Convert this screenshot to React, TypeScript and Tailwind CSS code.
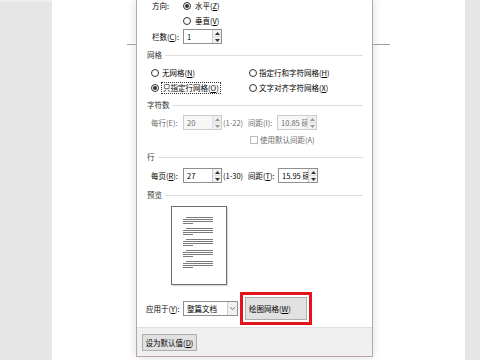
import React from 'react';

const font = { fontFamily: '"Noto Sans CJK SC", "Noto Sans", sans-serif' };

// radio button glyph
const Radio = ({ checked }: { checked?: boolean }) => (
  <span className="w-[8px] h-[8px] rounded-full border border-[#333333] bg-white flex items-center justify-center shrink-0">
    {checked && <span className="w-[4px] h-[4px] rounded-full bg-[#333333]" />}
  </span>
);

const Key = ({ k }: { k: string }) => (
  <>
    (<span className="underline">{k}</span>)
  </>
);

const Tri = ({ up, color }: { up?: boolean; color: string }) => (
  <svg width="5" height="3" viewBox="0 0 5 3">
    <path d={up ? 'M0 3 L2.5 0 L5 3 Z' : 'M0 0 L2.5 3 L5 0 Z'} fill={color} />
  </svg>
);

const SpinInput = ({ value, disabled, width }: { value: string; disabled?: boolean; width: string }) => (
  <div
    className={`flex h-[15px] border ${disabled ? 'border-[#cccccc] bg-[#f7f7f7] text-[#6d6d6d]' : 'border-[#8f8f8f] bg-white text-black'} ${width}`}
  >
    <div className="flex-1 pl-[3px] flex items-center overflow-hidden whitespace-nowrap">{value}</div>
    <div className={`w-[9px] flex flex-col border-l ${disabled ? 'border-[#dddddd]' : 'border-[#cccccc]'}`}>
      <div className="flex-1 flex items-center justify-center bg-[#f0f0f0]">
        <Tri up color={disabled ? '#999' : '#333'} />
      </div>
      <div className="flex-1 flex items-center justify-center bg-[#f0f0f0] border-t border-[#dddddd]">
        <Tri color={disabled ? '#999' : '#333'} />
      </div>
    </div>
  </div>
);

const Heading = ({ children, mt }: { children: React.ReactNode; mt: string }) => (
  <div className={`flex items-center h-[12px] ${mt}`}>
    <span className="text-[#333333]">{children}</span>
    <div className="flex-1 h-px bg-[#dcdcdc] ml-[3px]" />
  </div>
);

const PreviewLines = () => (
  <div className="flex flex-col gap-[4px]">
    {[0, 1, 2, 3, 4].map((g) => (
      <div key={g} className="flex flex-col gap-[1px]">
        <div className="h-px bg-[#7a7a7a] ml-[3px] w-[27px]" />
        <div className="h-px bg-[#7a7a7a] w-[30px]" />
        <div className="h-px bg-[#7a7a7a] w-[30px]" />
        <div className="h-px bg-[#7a7a7a] w-[10px]" />
      </div>
    ))}
  </div>
);

export default function App() {
  return (
    <div className="w-[480px] h-[360px] flex bg-white overflow-hidden text-[7.5px] leading-none text-black" style={font}>
      <div className="w-[52px] h-full bg-[#e6e6e6] border-t-2 border-[#ededed]" />

      <div className="flex-1 relative">
        {/* ruler marks of the page behind */}
        <div className="absolute left-[75px] top-[44px] w-[9px] h-px bg-[#a0a0a0]" />
        <div className="absolute left-[321px] top-[44px] w-[17px] h-px bg-[#a0a0a0]" />

        <div className="ml-[84px] w-[237px] h-[357px] flex flex-col border-x border-b border-[#b9a3ab] bg-[#f0f0f0] shadow-[0_0_10px_rgba(0,0,0,0.14)]">
          {/* tab page */}
          <div className="h-[327px] bg-white pl-[10px] pr-[9px] flex flex-col">
            <div className="flex items-center h-[12px] ml-[5px]">
              <span className="w-[31px]">方向:</span>
              <Radio checked />
              <span className="ml-[4px]">
                水平<Key k="Z" />
              </span>
            </div>
            <div className="flex items-center h-[17px] ml-[36px]">
              <Radio />
              <span className="ml-[4px]">
                垂直<Key k="V" />
              </span>
            </div>
            <div className="flex items-center h-[15px] ml-[5px]">
              <span className="w-[31px]">
                栏数<Key k="C" />:
              </span>
              <SpinInput value="1" width="w-[39px]" />
            </div>

            <Heading mt="mt-[5px]">网格</Heading>
            <div className="flex items-center h-[12px] mt-[6px] ml-[4px]">
              <div className="w-[98px] flex items-center">
                <Radio />
                <span className="ml-[3px]">
                  无网格<Key k="N" />
                </span>
              </div>
              <Radio />
              <span className="ml-[2px]">
                指定行和字符网格<Key k="H" />
              </span>
            </div>
            <div className="flex items-center h-[12px] mt-[3px] ml-[4px]">
              <div className="w-[98px] flex items-center">
                <Radio checked />
                <span className="ml-[2px] px-[1px] py-[1px] border border-dotted border-[#333333]">
                  只指定行网格<Key k="O" />
                </span>
              </div>
              <Radio />
              <span className="ml-[2px]">
                文字对齐字符网格<Key k="X" />
              </span>
            </div>

            <Heading mt="mt-[5px]">字符数</Heading>
            <div className="flex items-center h-[15px] mt-[4px] ml-[4px] text-[#6d6d6d]">
              <span className="w-[32px]">每行(E):</span>
              <SpinInput value="20" disabled width="w-[39px]" />
              <span className="ml-[1px] w-[25px]">(1-22)</span>
              <span className="w-[29px]">间距(I):</span>
              <SpinInput value="10.85 磅" disabled width="w-[40px]" />
            </div>
            <div className="flex items-center h-[12px] mt-[4px] ml-[103px] text-[#6d6d6d]">
              <span className="w-[8px] h-[8px] border border-[#bbbbbb] bg-white shrink-0" />
              <span className="ml-[2px]">使用默认间距(A)</span>
            </div>

            <Heading mt="mt-[5px]">行</Heading>
            <div className="flex items-center h-[15px] mt-[5px] ml-[4px]">
              <span className="w-[32px]">
                每页<Key k="R" />:
              </span>
              <SpinInput value="27" width="w-[39px]" />
              <span className="ml-[1px] w-[25px]">(1-30)</span>
              <span className="w-[30px]">
                间距<Key k="T" />:
              </span>
              <SpinInput value="15.95 磅" width="w-[40px]" />
            </div>

            <Heading mt="mt-[6px]">预览</Heading>
            <div className="mt-[5px] ml-[24px] w-[56px] h-[79px] border border-[#6e6e6e] bg-white pt-[10px] pl-[11px] shadow-[1px_1px_1px_rgba(0,0,0,0.15)]">
              <PreviewLines />
            </div>

            <div className="flex items-center h-[33px] mt-[7px] -ml-[1px]">
              <span className="w-[37px]">
                应用于<Key k="Y" />:
              </span>
              <div className="w-[55px] h-[15px] flex border border-[#8f8f8f] bg-white">
                <div className="flex-1 pl-[3px] flex items-center">整篇文档</div>
                <div className="w-[10px] flex items-center justify-center border-l border-[#cccccc] bg-[#f0f0f0]">
                  <svg width="5" height="3" viewBox="0 0 5 3">
                    <path d="M0.3 0.3 L2.5 2.6 L4.7 0.3" stroke="#555" strokeWidth="0.8" fill="none" />
                  </svg>
                </div>
              </div>
              <div className="ml-[2px] w-[72px] h-[33px] border-[3px] border-[#e3141c] p-[2px]">
                <div className="w-full h-full bg-[#e1e1e1] border border-[#adadad] flex items-center pl-[3px]">
                  绘图网格<Key k="W" />
                </div>
              </div>
            </div>
          </div>

          {/* bottom bar */}
          <div className="flex-1 flex items-start pt-[6px] pl-[5px] border-t border-[#dfdfdf]">
            <div className="w-[55px] h-[17px] bg-[#e1e1e1] border border-[#adadad] flex items-center justify-center">
              设为默认值<Key k="D" />
            </div>
          </div>
        </div>
      </div>

      <div className="w-[15px] h-full bg-[#e6e6e6]" />
    </div>
  );
}
